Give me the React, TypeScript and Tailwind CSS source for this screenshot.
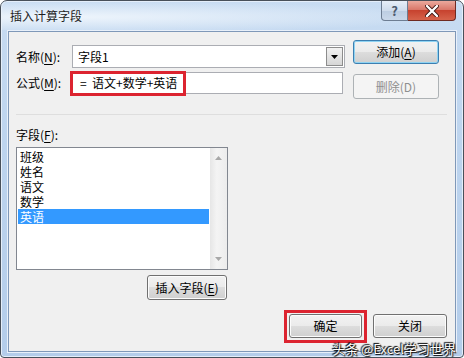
import React from 'react';

const items = ['班级', '姓名', '语文', '数学', '英语'];

function Btn({
  children,
  className = '',
  kind = 'normal',
}: {
  children: React.ReactNode;
  className?: string;
  kind?: 'normal' | 'default' | 'disabled';
}) {
  const skin =
    kind === 'default'
      ? 'border-[#3c7fb1] bg-[linear-gradient(#f2f2f2_0%,#ebebeb_49%,#dddddd_50%,#cfcfcf_100%)] shadow-[inset_0_0_0_1px_#8fd3f2]'
      : kind === 'disabled'
      ? 'border-[#adb2b5] bg-[#f4f4f4] text-[#8f8f8f]'
      : 'border-[#707070] bg-[linear-gradient(#f2f2f2_0%,#ebebeb_49%,#dddddd_50%,#cfcfcf_100%)] shadow-[inset_0_0_0_1px_#fcfcfc]';
  return (
    <div
      className={`flex items-center justify-center rounded-[3px] border text-[12px] leading-none ${skin} ${className}`}
    >
      {children}
    </div>
  );
}

function Key({ k }: { k: string }) {
  return <span className="underline underline-offset-[2px]">{k}</span>;
}

export default function App() {
  return (
    <div className="relative w-[464px] h-[358px] overflow-hidden bg-white font-['Noto_Sans_CJK_SC','Microsoft_YaHei',sans-serif] text-black">
      <div className="flex flex-col w-[464px] h-[358px] rounded-t-[7px] rounded-b-[4px] border border-[#48505a] bg-[linear-gradient(180deg,#c8dcf2_0%,#bdd4ee_40%,#b4cdea_100%)] shadow-[inset_0_0_0_1px_#e4eefa]">
        {/* title bar */}
        <div className="flex h-[29px] items-start justify-between pl-[9px] pr-[7px] bg-[radial-gradient(ellipse_at_60px_16px,#eef5fc_0%,rgba(238,245,252,0)_70%)]">
          <div className="pt-[6px] text-[12px] leading-[18px] text-[#1e1e1e]">插入计算字段</div>
          <div className="flex">
            <div className="flex h-[20px] w-[27px] items-center justify-center rounded-bl-[4px] border border-t-0 border-[#6d7d92] bg-[linear-gradient(#e6eef8_0%,#cfdcec_50%,#bccde2_51%,#cad8ea_100%)] text-[13px] font-bold leading-none text-[#4c5a6e]">
              ?
            </div>
            <div className="flex h-[20px] w-[48px] items-center justify-center rounded-br-[4px] border border-l-0 border-t-0 border-[#6e2a22] bg-[linear-gradient(#eaa99d_0%,#d9786a_45%,#c7432f_50%,#d6634b_100%)]">
              <svg width="14" height="12" viewBox="0 0 14 12">
                <path d="M2 1 L12 11 M12 1 L2 11" stroke="#3b1410" strokeWidth="4" strokeLinecap="round" />
                <path d="M2 1 L12 11 M12 1 L2 11" stroke="#ffffff" strokeWidth="2.4" strokeLinecap="round" />
              </svg>
            </div>
          </div>
        </div>

        {/* client area */}
        <div className="mx-[7px] mt-[1px] h-[321px] border border-[#7f98b8] bg-[#f0f0f0] shadow-[0_0_0_1px_#e8f0fa]">
          {/* top section */}
          <div className="flex pl-[7px] pt-[8px]">
            <div className="mt-[5px] w-[329px]">
              <div className="flex h-[23px] items-center">
                <div className="w-[56px] text-[12px] leading-none">
                  名称(<Key k="N" />):
                </div>
                <div className="flex h-[23px] w-[273px] items-stretch border border-[#abadb3] bg-white">
                  <div className="flex flex-1 items-center pl-[5px] text-[12px]">字段1</div>
                  <div className="my-[1px] mr-[1px] flex w-[17px] items-center justify-center border border-[#8c8c8c] bg-[linear-gradient(#f2f2f2,#d6d6d6)]">
                    <svg width="7" height="4" viewBox="0 0 7 4">
                      <path d="M0 0 H7 L3.5 4 Z" fill="#000" />
                    </svg>
                  </div>
                </div>
              </div>
              <div className="mt-[4px] flex h-[22px] items-center">
                <div className="w-[56px] text-[12px] leading-none">
                  公式(<Key k="M" />):
                </div>
                <div className="relative flex h-[22px] w-[271px] items-center border border-[#abadb3] bg-white pl-[7px] text-[12px] whitespace-pre">
                  {'=  语文+数学+英语'}
                  <div className="absolute left-[-3px] top-[-2px] h-[25px] w-[116px] border-[3px] border-[#dc2430]" />
                </div>
              </div>
            </div>
            <div className="ml-[8px] w-[86px]">
              <Btn kind="default" className="h-[24px]">
                添加(<Key k="A" />)
              </Btn>
              <Btn kind="disabled" className="mt-[10px] h-[25px]">
                删除(D)
              </Btn>
            </div>
          </div>

          {/* separator */}
          <div className="ml-[7px] mt-[15px] h-[1px] w-[431px] bg-[#dedede]" />

          {/* field list */}
          <div className="pl-[7px]">
            <div className="mt-[12px] h-[16px] text-[12px] leading-[16px]">
              字段(<Key k="F" />):
            </div>
            <div className="mt-[4px] flex h-[123px] w-[212px] border border-[#828790] bg-white">
              <div className="flex-1 px-[1px] pt-[1px]">
                {items.map((t, i) => (
                  <div
                    key={t}
                    className={
                      i === 4
                        ? 'h-[15px] overflow-hidden bg-[#3399ff] pl-[2px] text-[12px] leading-[15px] text-white'
                        : 'h-[15px] overflow-hidden pl-[2px] text-[12px] leading-[15px]'
                    }
                  >
                    {t}
                  </div>
                ))}
              </div>
              <div className="flex w-[17px] flex-col items-center justify-between bg-[linear-gradient(90deg,#e6e6e6,#f4f4f4_40%,#ececec)] py-[8px]">
                <svg width="7" height="4" viewBox="0 0 7 4">
                  <path d="M0 4 H7 L3.5 0 Z" fill="#a8a8a8" />
                </svg>
                <svg width="7" height="4" viewBox="0 0 7 4">
                  <path d="M0 0 H7 L3.5 4 Z" fill="#a8a8a8" />
                </svg>
              </div>
            </div>
            <Btn className="ml-[131px] mt-[5px] h-[25px] w-[80px]">
              插入字段(<Key k="E" />)
            </Btn>
          </div>

          {/* bottom buttons */}
          <div className="mt-[14px] flex justify-end gap-[11px] pr-[8px]">
            <div className="relative">
              <Btn className="h-[24px] w-[73px]">确定</Btn>
              <div className="absolute left-[-5px] top-[-4px] h-[33px] w-[83px] border-[3px] border-[#dc2430]" />
            </div>
            <Btn className="h-[24px] w-[74px]">关闭</Btn>
          </div>
        </div>
      </div>

      {/* watermark */}
      <div className="absolute bottom-[1px] right-[8px] text-[13px] leading-[16px] text-white [text-shadow:0_0_1px_#000,1px_1px_1px_#000,-1px_-1px_1px_#000]">
        头条 @Excel学习世界
      </div>
    </div>
  );
}
